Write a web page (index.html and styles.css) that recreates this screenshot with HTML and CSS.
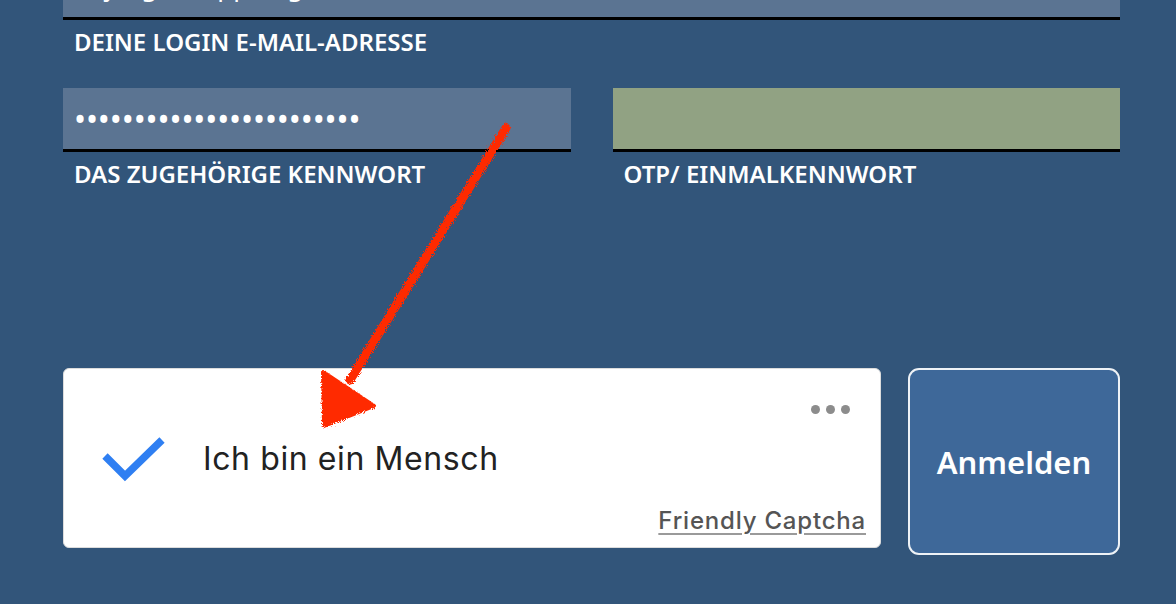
FILE: index.html
```html
<!DOCTYPE html>
<html lang="de">
<head>
  <meta charset="UTF-8" />
  <meta name="viewport" content="width=device-width, initial-scale=1.0"/>
  <title>Login</title>
  <link rel="stylesheet" href="styles.css">
</head>
<body>
  <form class="login">
    <div class="field">
      <div class="input">m.jaeger.hoppe@gmx.de</div>
      <label>Deine Login E-Mail-Adresse</label>
    </div>

    <div class="pair">
      <div class="field">
        <div class="input dots">&bull;&bull;&bull;&bull;&bull;&bull;&bull;&bull;&bull;&bull;&bull;&bull;&bull;&bull;&bull;&bull;&bull;&bull;&bull;&bull;&bull;&bull;&bull;&bull;</div>
        <label>Das zugehörige Kennwort</label>
      </div>
      <div class="field">
        <div class="input otp"></div>
        <label>OTP/ Einmalkennwort</label>
      </div>
    </div>

    <div class="actions">
      <div class="captcha">
        <div class="captcha-menu"><span></span><span></span><span></span></div>
        <div class="captcha-main">
          <svg class="check" width="66" height="46" viewBox="0 0 66 46">
            <path d="M3 20 L23 40 L60 4" fill="none" stroke="#2f7ff2" stroke-width="7.5" stroke-linecap="butt" stroke-linejoin="miter"/>
          </svg>
          <span class="captcha-text">Ich bin ein Mensch</span>
        </div>
        <a class="captcha-brand">Friendly Captcha</a>
      </div>
      <button type="button" class="submit">Anmelden</button>
    </div>
  </form>

  <!-- hand drawn annotation -->
  <svg class="arrow" width="1176" height="604" viewBox="0 0 1176 604">
    <defs>
      <filter id="rough">
        <feTurbulence type="fractalNoise" baseFrequency="0.9" numOctaves="2" result="n"/>
        <feDisplacementMap in="SourceGraphic" in2="n" scale="5"/>
      </filter>
    </defs>
    <g filter="url(#rough)" fill="#ff2a00" stroke="#ff2a00">
      <path d="M506 128 L350 380" stroke-width="9" stroke-linecap="round"/>
      <polygon points="323,372 374,406 324,426" stroke-width="4" stroke-linejoin="round"/>
    </g>
  </svg>
</body>
</html>
```

FILE: styles.css
```css
:root {
  --bg: #32557a;
  --field: #5b7492;
  --otp: #91a283;
  --button: #3e6899;
}

body {
  margin: 0;
  background: var(--bg);
  font-family: "Noto Sans", "Open Sans", sans-serif;
  overflow: hidden;
  height: 604px;
  position: relative;
}

.login {
  margin-top: -44px;
  padding: 0 56px 0 63px;
  display: flex;
  flex-direction: column;
  gap: 32px;
}

.field {
  display: flex;
  flex-direction: column;
}

.input {
  height: 61px;
  background: var(--field);
  border-bottom: 3px solid #000;
  color: #fff;
  font-size: 26px;
  line-height: 61px;
  padding: 0 11px;
  box-sizing: content-box;
}

.dots {
  font-size: 32px;
  letter-spacing: -0.1px;
}

.otp {
  background: var(--otp);
}

.field label {
  color: #fff;
  font-weight: 600;
  font-size: 24px;
  letter-spacing: 0;
  text-transform: uppercase;
  padding: 8px 11px 0;
  line-height: 28px;
}

.pair {
  display: grid;
  grid-template-columns: 1fr 1fr;
  gap: 42px;
}

.actions {
  margin-top: 148px;
  display: grid;
  grid-template-columns: 1fr 212px;
  gap: 27px;
  align-items: start;
}

.captcha {
  position: relative;
  height: 180px;
  box-sizing: border-box;
  background: #fff;
  border: 1px solid #dcdcdc;
  border-radius: 6px;
  font-family: Inter, "Liberation Sans", sans-serif;
  display: flex;
  flex-direction: column;
  justify-content: space-between;
  padding: 36px 14px 12px 38px;
}

.captcha-menu {
  display: flex;
  justify-content: flex-end;
  gap: 6px;
  padding-right: 16px;
  height: 8px;
}

.captcha-menu span {
  width: 9px;
  height: 9px;
  border-radius: 50%;
  background: #8c8c8c;
}

.captcha-main {
  display: flex;
  align-items: center;
  gap: 35px;
  margin-top: -2px;
}

.captcha-text {
  font-size: 32px;
  letter-spacing: 0.6px;
  color: #222;
}

.captcha-brand {
  align-self: flex-end;
  font-size: 24px;
  letter-spacing: 0.8px;
  font-weight: 500;
  color: #555;
  text-decoration: underline;
  text-decoration-color: #9a9a9a;
  text-underline-offset: 4px;
  text-decoration-thickness: 2px;
}

.submit {
  height: 187px;
  background: var(--button);
  border: 2px solid #eef2f6;
  border-radius: 11px;
  color: #fff;
  font-family: "Noto Sans", "Open Sans", sans-serif;
  font-weight: 600;
  font-size: 31px;
  padding: 0;
}

.arrow {
  position: absolute;
  left: 0;
  top: 0;
  pointer-events: none;
}
```
